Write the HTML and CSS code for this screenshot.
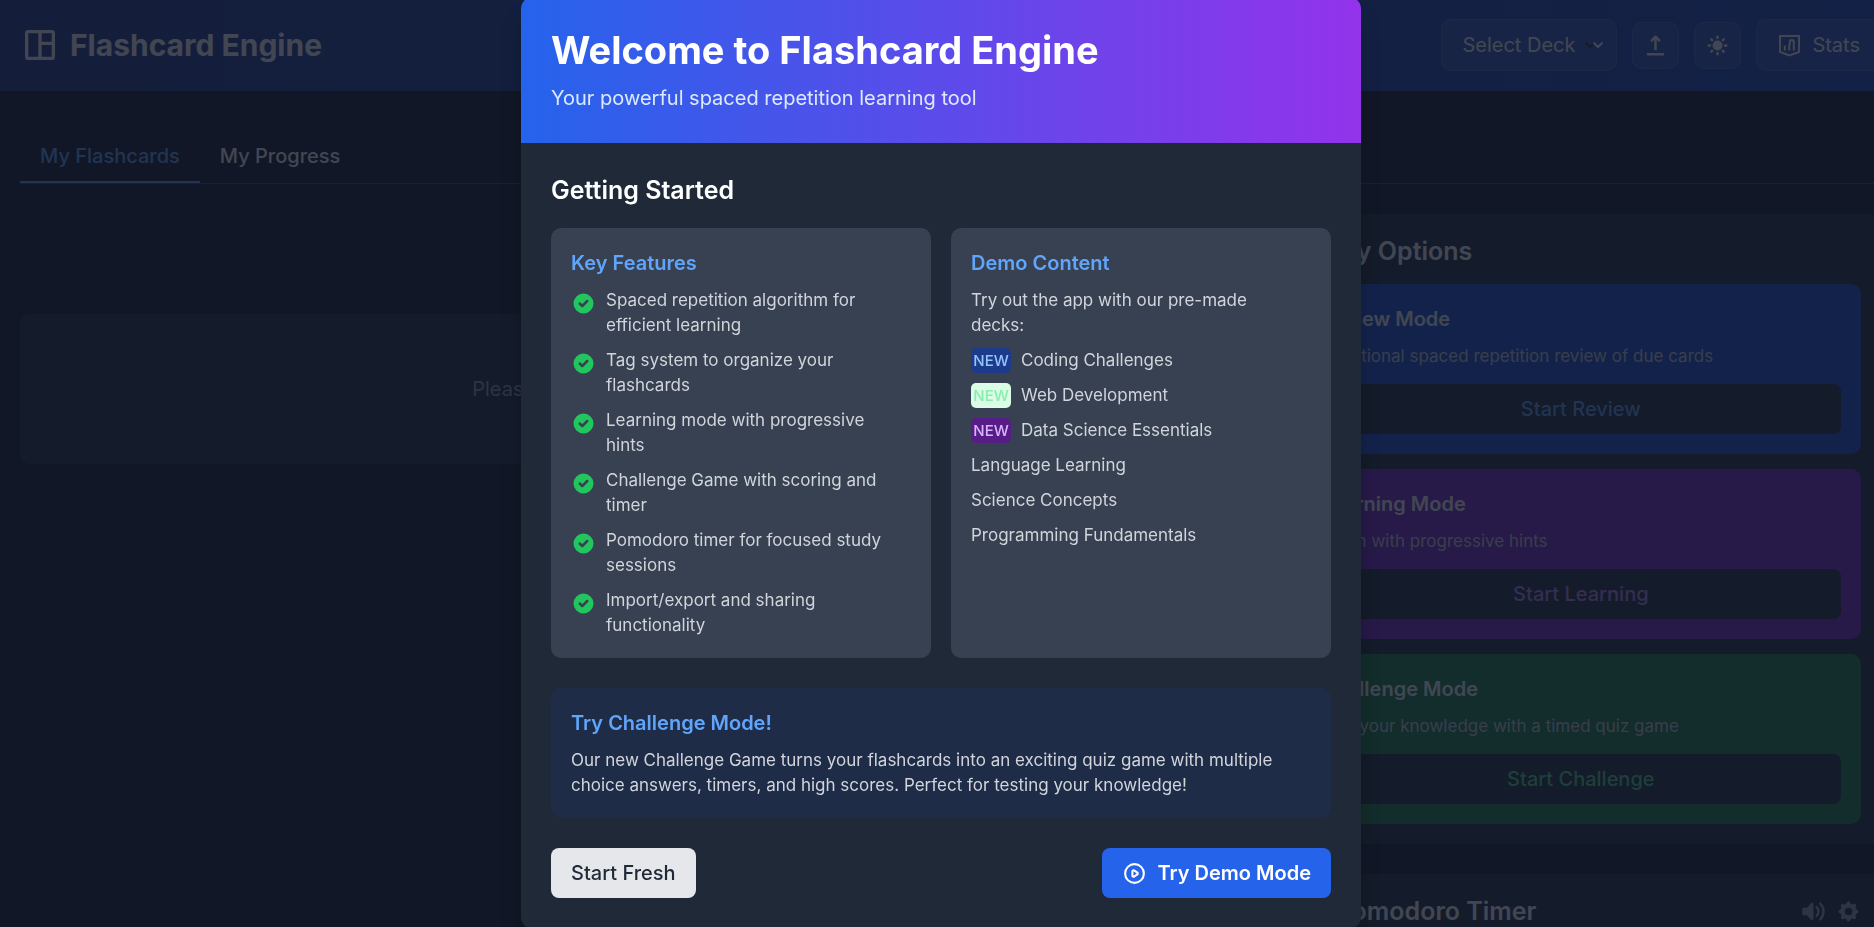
FILE: index.html
```html
<!DOCTYPE html>
<html lang="en">
<head>
    <meta charset="UTF-8">
    <meta name="viewport" content="width=device-width, initial-scale=1.0">
    <title>Flashcard Engine</title>
    <link rel="stylesheet" href="styles.css">
</head>
<body>
    <div class="page">
        <header class="app-header">
            <div class="brand">
                <svg class="brand-icon" viewBox="0 0 24 24" fill="none" stroke="currentColor" stroke-width="2">
                    <rect x="4" y="4" width="16" height="16" rx="1"/>
                    <path d="M12 4v16M12 11h8"/>
                </svg>
                <h1>Flashcard Engine</h1>
            </div>
            <div class="toolbar">
                <div class="deck-picker">
                    <select aria-label="Select deck">
                        <option>Select Deck</option>
                    </select>
                    <svg class="chevron chevron-dark" viewBox="0 0 12 8" fill="none" stroke="currentColor" stroke-width="2"><path d="M1.500 1.500L6 6l4.500-4.500"/></svg>
                    <svg class="chevron" viewBox="0 0 12 8" fill="none" stroke="currentColor" stroke-width="2"><path d="M1.500 1.500L6 6l4.500-4.500"/></svg>
                </div>
                <button class="icon-btn" aria-label="Import">
                    <svg class="icon" viewBox="0 0 20 20" fill="currentColor"><path d="M3 17a1 1 0 011-1h12a1 1 0 110 2H4a1 1 0 01-1-1zM6.293 6.707a1 1 0 010-1.414l3-3a1 1 0 011.414 0l3 3a1 1 0 01-1.414 1.414L11 5.414V13a1 1 0 11-2 0V5.414L7.707 6.707a1 1 0 01-1.414 0z"/></svg>
                </button>
                <button class="icon-btn" aria-label="Toggle theme">
                    <svg class="icon" viewBox="0 0 20 20" fill="currentColor"><path fill-rule="evenodd" d="M10 2a1 1 0 011 1v1a1 1 0 11-2 0V3a1 1 0 011-1zm4 8a4 4 0 11-8 0 4 4 0 018 0zm-.464 4.95l.707.707a1 1 0 001.414-1.414l-.707-.707a1 1 0 00-1.414 1.414zm2.12-10.607a1 1 0 010 1.414l-.706.707a1 1 0 11-1.414-1.414l.707-.707a1 1 0 011.414 0zM17 11a1 1 0 100-2h-1a1 1 0 100 2h1zm-7 4a1 1 0 011 1v1a1 1 0 11-2 0v-1a1 1 0 011-1zM5.05 6.464A1 1 0 106.465 5.05l-.708-.707a1 1 0 00-1.414 1.414l.707.707zm1.414 8.486l-.707.707a1 1 0 01-1.414-1.414l.707-.707a1 1 0 011.414 1.414zM4 11a1 1 0 100-2H3a1 1 0 000 2h1z"/></svg>
                </button>
                <button class="stats-btn">
                    <svg class="icon" viewBox="0 0 25 25" fill="none" stroke="currentColor" stroke-width="2"><path d="M3 3h19v16l-9.500 3.500L3 19zM7.800 17.500v-5M12.300 17.500v-6M12.800 12V9a2 2 0 0 1 4 0v8.500"/></svg>
                    Stats
                </button>
            </div>
        </header>

        <main>
            <nav class="tabs">
                <button class="tab active">My Flashcards</button>
                <button class="tab">My Progress</button>
            </nav>

            <div class="layout">
                <section class="deck-area">
                    <div class="empty-state">Please select a deck to get started</div>
                </section>

                <aside class="sidebar">
                    <section class="panel">
                        <h2>Study Options</h2>
                        <div class="modes">
                            <div class="mode review">
                                <h3>Review Mode</h3>
                                <p>Traditional spaced repetition review of due cards</p>
                                <button>Start Review</button>
                            </div>
                            <div class="mode learning">
                                <h3>Learning Mode</h3>
                                <p>Learn with progressive hints</p>
                                <button>Start Learning</button>
                            </div>
                            <div class="mode challenge">
                                <h3>Challenge Mode</h3>
                                <p>Test your knowledge with a timed quiz game</p>
                                <button>Start Challenge</button>
                            </div>
                        </div>
                    </section>

                    <section class="panel">
                        <div class="timer-head">
                            <svg class="icon" viewBox="0 0 24 24" fill="none" stroke="currentColor" stroke-width="2"><circle cx="12" cy="12" r="9"/><path d="M12 8v4l3 3"/></svg>
                            <h2>Pomodoro Timer</h2>
                            <button aria-label="Sound">
                                <svg class="icon" viewBox="0 0 20 20" fill="currentColor"><path fill-rule="evenodd" d="M9.383 3.076A1 1 0 0110 4v12a1 1 0 01-1.707.707L4.586 13H2a1 1 0 01-1-1V8a1 1 0 011-1h2.586l3.707-3.707a1 1 0 011.09-.217zM14.657 2.929a1 1 0 011.414 0A9.972 9.972 0 0119 10a9.972 9.972 0 01-2.929 7.071 1 1 0 01-1.414-1.414A7.971 7.971 0 0017 10c0-2.21-.894-4.208-2.343-5.657a1 1 0 010-1.414zm-2.829 2.828a1 1 0 011.415 0A5.983 5.983 0 0115 10a5.984 5.984 0 01-1.757 4.243 1 1 0 01-1.415-1.415A3.984 3.984 0 0013 10a3.983 3.983 0 00-1.172-2.828 1 1 0 010-1.415z"/></svg>
                            </button>
                            <button aria-label="Timer settings">
                                <svg class="icon" viewBox="0 0 20 20" fill="currentColor"><path fill-rule="evenodd" d="M11.49 3.17c-.38-1.56-2.6-1.56-2.98 0a1.532 1.532 0 01-2.286.948c-1.372-.836-2.942.734-2.106 2.106.54.886.061 2.042-.947 2.287-1.561.379-1.561 2.6 0 2.978a1.532 1.532 0 01.947 2.287c-.836 1.372.734 2.942 2.106 2.106a1.532 1.532 0 012.287.947c.379 1.561 2.6 1.561 2.978 0a1.533 1.533 0 012.287-.947c1.372.836 2.942-.734 2.106-2.106a1.533 1.533 0 01.947-2.287c1.561-.379 1.561-2.6 0-2.978a1.532 1.532 0 01-.947-2.287c.836-1.372-.734-2.942-2.106-2.106a1.532 1.532 0 01-2.287-.947zM10 13a3 3 0 100-6 3 3 0 000 6z"/></svg>
                            </button>
                        </div>
                    </section>
                </aside>
            </div>
        </main>
    </div>

    <!-- Shared check mark for the feature list -->
    <svg class="sprite" aria-hidden="true">
        <symbol id="check" viewBox="0 0 20 20"><path fill-rule="evenodd" d="M10 18a8 8 0 100-16 8 8 0 000 16zm3.707-9.293a1 1 0 00-1.414-1.414L9 10.586 7.707 9.293a1 1 0 00-1.414 1.414l2 2a1 1 0 001.414 0l4-4z"/></symbol>
    </svg>

    <div class="overlay">
        <div class="modal" role="dialog" aria-labelledby="welcome-title">
            <div class="modal-header">
                <h2 id="welcome-title">Welcome to Flashcard Engine</h2>
                <p>Your powerful spaced repetition learning tool</p>
            </div>
            <div class="modal-body">
                <h3 class="section-title">Getting Started</h3>
                <div class="cards">
                    <div class="card">
                        <h4>Key Features</h4>
                        <ul>
                            <li><svg class="check"><use href="#check"/></svg><span>Spaced repetition algorithm for efficient learning</span></li>
                            <li><svg class="check"><use href="#check"/></svg><span>Tag system to organize your flashcards</span></li>
                            <li><svg class="check"><use href="#check"/></svg><span>Learning mode with progressive hints</span></li>
                            <li><svg class="check"><use href="#check"/></svg><span>Challenge Game with scoring and timer</span></li>
                            <li><svg class="check"><use href="#check"/></svg><span>Pomodoro timer for focused study sessions</span></li>
                            <li><svg class="check"><use href="#check"/></svg><span>Import/export and sharing functionality</span></li>
                        </ul>
                    </div>
                    <div class="card">
                        <h4>Demo Content</h4>
                        <p>Try out the app with our pre-made decks:</p>
                        <ul>
                            <li><span class="badge blue">NEW</span>Coding Challenges</li>
                            <li><span class="badge green">NEW</span>Web Development</li>
                            <li><span class="badge purple">NEW</span>Data Science Essentials</li>
                            <li>Language Learning</li>
                            <li>Science Concepts</li>
                            <li>Programming Fundamentals</li>
                        </ul>
                    </div>
                </div>
                <div class="callout">
                    <h4>Try Challenge Mode!</h4>
                    <p>Our new Challenge Game turns your flashcards into an exciting quiz game with multiple choice answers, timers, and high scores. Perfect for testing your knowledge!</p>
                </div>
                <div class="actions">
                    <button class="btn btn-light">Start Fresh</button>
                    <button class="btn btn-primary">
                        <svg class="icon" viewBox="0 0 24 24" fill="none" stroke="currentColor" stroke-width="2" stroke-linecap="round" stroke-linejoin="round"><path d="M14.752 11.168l-3.197-2.132A1 1 0 0010 9.87v4.263a1 1 0 001.555.832l3.197-2.132a1 1 0 000-1.664z"/><path d="M21 12a9 9 0 11-18 0 9 9 0 0118 0z"/></svg>
                        Try Demo Mode
                    </button>
                </div>
            </div>
        </div>
    </div>
</body>
</html>
```
FILE: styles.css
```css
* {
    box-sizing: border-box;
    margin: 0;
    padding: 0;
}
body {
    font-family: Inter, "Liberation Sans", sans-serif;
    font-size: 20px;
    line-height: 30px;
    background: #111827;
    color: #fff;
    height: 100vh;
    overflow: hidden;
}
button, select {
    font: inherit;
    color: inherit;
    border: none;
    background: none;
    cursor: pointer;
}
ul {
    list-style: none;
}
svg {
    flex-shrink: 0;
    display: block;
}
.sprite {
    position: absolute;
    width: 0;
    height: 0;
}
.icon {
    width: 25px;
    height: 25px;
}

/* Page behind the dialog, a little wider than the window */
.page {
    width: calc(100% + 27px);
    height: 100vh;
    overflow: hidden;
}
.app-header {
    display: flex;
    justify-content: space-between;
    align-items: center;
    padding: 19px 20px 20px;
    background: linear-gradient(to right, #1e3a8a, #1d46c2);
}
.brand {
    display: flex;
    align-items: center;
    gap: 10px;
}
.brand-icon {
    width: 40px;
    height: 40px;
}
.brand h1 {
    font-size: 30px;
    line-height: 40px;
    font-weight: 700;
}
.toolbar {
    display: flex;
    align-items: center;
    gap: 15px;
}
.deck-picker {
    position: relative;
}
.deck-picker select,
.icon-btn,
.stats-btn {
    background: rgba(255, 255, 255, 0.1);
    background-clip: padding-box;
    border: 1px solid rgba(255, 255, 255, 0.2);
    border-radius: 10px;
}
.deck-picker select {
    appearance: none;
    display: block;
    width: 176px;
    height: 52px;
    padding: 10px 40px 10px 20px;
}
.chevron {
    position: absolute;
    top: 22px;
    right: 13px;
    width: 12px;
    height: 8px;
    pointer-events: none;
}
.chevron-dark {
    right: 21px;
    color: #1f2937;
}
.icon-btn {
    padding: 10px;
}
.stats-btn {
    display: flex;
    align-items: center;
    gap: 10px;
    padding: 10px 20px;
}

main {
    padding: 40px 20px;
}
.tabs {
    display: flex;
    border-bottom: 1px solid #374151;
    margin-bottom: 30px;
}
.tab {
    padding: 10px 20px;
    font-weight: 500;
    border-bottom: 2px solid transparent;
}
.tab.active {
    color: #60a5fa;
    border-color: #60a5fa;
}
.layout {
    display: grid;
    grid-template-columns: repeat(3, 1fr);
    gap: 30px;
}
.deck-area {
    grid-column: span 2;
    padding-top: 100px;
}
.empty-state {
    padding: 60px 20px;
    text-align: center;
    color: #9ca3af;
    background: #1f2937;
    border-radius: 10px;
}
.sidebar {
    display: flex;
    flex-direction: column;
    gap: 30px;
}
.panel {
    padding: 20px;
    background: #1f2937;
    border-radius: 10px;
}
.panel h2 {
    font-size: 25px;
    line-height: 35px;
    font-weight: 600;
}
.modes {
    display: flex;
    flex-direction: column;
    gap: 15px;
    margin-top: 15px;
}
.mode {
    padding: 20px;
    border-radius: 10px;
}
.mode h3 {
    font-size: 20px;
    font-weight: 600;
    margin-bottom: 10px;
}
.mode p {
    font-size: 17px;
    line-height: 25px;
    margin-bottom: 15px;
    color: #d1d5db;
}
.mode button {
    width: 100%;
    padding: 10px;
    font-weight: 500;
    background: #1f2937;
    border-radius: 8px;
}
.review {
    background: #1d4ed8;
}
.review button {
    color: #60a5fa;
}
.learning {
    background: #7e22ce;
}
.learning button {
    color: #c084fc;
}
.challenge {
    background: #15803d;
}
.challenge button {
    color: #4ade80;
}
.timer-head {
    display: flex;
    align-items: center;
    gap: 10px;
    color: #9ca3af;
}
.timer-head h2 {
    flex: 1;
    color: #fff;
}

/* Welcome dialog */
.overlay {
    position: fixed;
    inset: 0;
    display: flex;
    justify-content: center;
    align-items: flex-start;
    padding-left: 8px;
    overflow: hidden;
    background: rgba(17, 24, 39, 0.8);
}
.modal {
    width: 840px;
    max-width: 100%;
    margin-top: -2px;
    background: #1f2937;
    border-radius: 10px;
    overflow: hidden;
    box-shadow: 0 20px 25px -5px rgba(0, 0, 0, 0.3);
}
.modal-header {
    padding: 30px;
    background: linear-gradient(to right, #2563eb, #9333ea);
}
.modal-header h2 {
    font-size: 38px;
    line-height: 45px;
    font-weight: 700;
    margin-bottom: 10px;
}
.modal-header p {
    color: #dbeafe;
}
.modal-body {
    padding: 30px;
}
.section-title {
    font-size: 25px;
    line-height: 35px;
    font-weight: 600;
    margin-bottom: 20px;
}
.cards {
    display: grid;
    grid-template-columns: 1fr 1fr;
    gap: 20px;
    margin-bottom: 30px;
}
.card,
.callout {
    font-size: 17px;
    line-height: 25px;
    color: #d1d5db;
    border-radius: 10px;
}
.card {
    padding: 20px 30px 20px 20px;
    background: #374151;
}
.card h4,
.callout h4 {
    font-size: 20px;
    line-height: 30px;
    font-weight: 600;
    color: #60a5fa;
    margin-bottom: 10px;
}
.card p {
    margin-bottom: 10px;
}
.card ul {
    display: flex;
    flex-direction: column;
    gap: 10px;
}
.card li {
    display: flex;
    gap: 10px;
}
.check {
    width: 25px;
    height: 25px;
    margin-top: 3px;
    fill: #22c55e;
}
.badge {
    width: 40px;
    text-align: center;
    font-size: 15px;
    font-weight: 500;
    border-radius: 5px;
}
.badge.blue {
    background: #1e3a8a;
    color: #93c5fd;
}
.badge.green {
    background: #dcfce7;
    color: #86efac;
}
.badge.purple {
    background: #581c87;
    color: #d8b4fe;
}
.callout {
    padding: 20px;
    margin-bottom: 30px;
    background: #1f2c48;
}
.actions {
    display: flex;
    justify-content: space-between;
}
.btn {
    display: flex;
    align-items: center;
    gap: 10px;
    padding: 10px 20px;
    border-radius: 8px;
}
.btn-light {
    background: #e5e7eb;
    color: #1f2937;
    font-weight: 500;
}
.btn-primary {
    background: #2563eb;
    font-weight: 600;
}
```
